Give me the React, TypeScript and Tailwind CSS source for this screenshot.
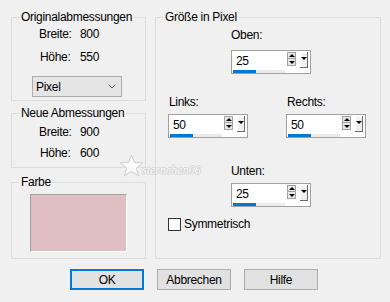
import React from "react";

const font = { fontFamily: '"Liberation Sans", Arial, sans-serif' };

function Group({ title, className, children }: { title: string; className: string; children?: React.ReactNode }) {
  return (
    <div className={`relative border border-[#dcdcdc] ${className}`}>
      <span className="absolute left-[7px] -top-[9px] bg-[#f0f0f0] px-[2px] text-[12px] leading-[16px] text-black">{title}</span>
      {children}
    </div>
  );
}

function Spinner({ value }: { value: string }) {
  return (
    <div className="flex h-[24px] w-[80px] items-center border border-[#a0a0a0] bg-white">
      <div className="flex h-full w-[54px] flex-col pl-[1px] pt-[3px]">
        <span className="pl-[3px] text-[12px] leading-[14px] text-black">{value}</span>
        <div className="mt-[2px] h-[3px] w-[52px] bg-[#ebebeb]">
          <div className="h-[3px] w-[23px] bg-[#0078d7]" />
        </div>
      </div>
      <div className="ml-[1px] flex flex-col self-start pt-[1px]">
        <div className="flex h-[7px] w-[9px] items-center justify-center border border-[#a0a0a0] bg-[#e8e8e8]">
          <div className="h-0 w-0 border-b-[3px] border-l-[3px] border-r-[3px] border-b-black border-l-transparent border-r-transparent" />
        </div>
        <div className="flex h-[7px] w-[9px] items-center justify-center border border-t-0 border-[#a0a0a0] bg-[#e8e8e8]">
          <div className="h-0 w-0 border-t-[3px] border-l-[3px] border-r-[3px] border-t-black border-l-transparent border-r-transparent" />
        </div>
      </div>
      <div className="ml-[4px] mt-[1px] flex h-[16px] w-[8px] flex-col items-center self-start border-b border-r border-[#696969] bg-[#f0f0f0] pt-[5px] shadow-[inset_1px_1px_0_#ffffff]">
        <div className="h-0 w-0 border-t-[3px] border-l-[3px] border-r-[3px] border-t-black border-l-transparent border-r-transparent" />
      </div>
    </div>
  );
}

function Btn({ label, primary }: { label: string; primary?: boolean }) {
  return (
    <div
      className={`flex h-[21px] w-[74px] items-center justify-center bg-[#e1e1e1] text-[12px] leading-[16px] text-black ${
        primary ? "border-2 border-[#0078d7]" : "border border-[#adadad]"
      }`}
    >
      {label}
    </div>
  );
}

export default function App() {
  return (
    <div
      className="relative h-[302px] w-[390px] overflow-hidden bg-[#f0f0f0] pl-[11px] pt-[17px] tracking-[-0.3px] text-black"
      style={font}
    >
      <div className="flex gap-[9px]">
        {/* left column */}
        <div className="flex w-[135px] flex-col">
          <Group title="Originalabmessungen" className="h-[84px]">
            <div className="flex flex-col pt-[8px] text-[12px] leading-[16px]">
              <div className="flex pl-[27px]">
                <span className="w-[41px]">Breite:</span>
                <span>800</span>
              </div>
              <div className="mt-[7px] flex pl-[28px]">
                <span className="w-[40px]">Höhe:</span>
                <span>550</span>
              </div>
              <div className="ml-[20px] mt-[11px] flex h-[21px] w-[90px] items-center justify-between border border-[#adadad] bg-[#e5e5e5] pl-[3px] pr-[5px]">
                <span>Pixel</span>
                <svg width="8" height="5" viewBox="0 0 8 5">
                  <path d="M0.5 0.5 L4 4 L7.5 0.5" fill="none" stroke="#555" strokeWidth="1" />
                </svg>
              </div>
            </div>
          </Group>
          <Group title="Neue Abmessungen" className="mt-[12px] h-[55px]">
            <div className="flex flex-col pt-[10px] text-[12px] leading-[16px]">
              <div className="flex pl-[27px]">
                <span className="w-[41px]">Breite:</span>
                <span>900</span>
              </div>
              <div className="mt-[5px] flex pl-[28px]">
                <span className="w-[40px]">Höhe:</span>
                <span>600</span>
              </div>
            </div>
          </Group>
          <Group title="Farbe" className="mt-[14px] h-[77px]">
            <div className="pl-[18px] pt-[11px]">
              <div className="h-[58px] w-[97px] border-b border-l border-r border-t border-b-white border-l-[#a0a0a0] border-r-white border-t-[#a0a0a0] bg-[#dfbfc2]" />
            </div>
          </Group>
        </div>

        {/* right column */}
        <Group title="Größe in Pixel" className="h-[242px] w-[226px]">
          <div className="flex flex-col text-[12px] leading-[16px]">
            <div className="flex flex-col pl-[75px] pt-[9px]">
              <span>Oben:</span>
              <div className="mt-[7px]">
                <Spinner value="25" />
              </div>
            </div>
            <div className="mt-[20px] flex pl-[12px]">
              <div className="flex flex-col">
                <span className="pl-[1px]">Links:</span>
                <div className="mt-[4px]">
                  <Spinner value="50" />
                </div>
              </div>
              <div className="ml-[38px] flex flex-col">
                <span className="pl-[1px]">Rechts:</span>
                <div className="mt-[4px]">
                  <Spinner value="50" />
                </div>
              </div>
            </div>
            <div className="mt-[25px] flex flex-col pl-[75px]">
              <span>Unten:</span>
              <div className="mt-[4px]">
                <Spinner value="25" />
              </div>
            </div>
            <div className="mt-[9px] flex items-center pl-[12px]">
              <div className="h-[13px] w-[13px] border border-[#333333] bg-white" />
              <span className="ml-[3px]">Symmetrisch</span>
            </div>
          </div>
        </Group>
      </div>

      {/* buttons */}
      <div className="ml-[59px] mt-[10px] flex gap-[13px]">
        <Btn label="OK" primary />
        <Btn label="Abbrechen" />
        <Btn label="Hilfe" />
      </div>

      {/* watermark */}
      <div className="pointer-events-none absolute left-[119px] top-[154px] flex items-start">
        <svg className="block" width="25" height="23" viewBox="0 0 25 23">
          <polygon
            points="12.5,1 15.5,8.5 24,8.8 17.3,14 19.7,22 12.5,17.3 5.3,22 7.7,14 1,8.8 9.5,8.5"
            fill="#fafafa"
            stroke="#d0d0d0"
            strokeWidth="1"
          />
        </svg>
        <span
          className="-ml-[2px] mt-[10px] text-[12px] italic leading-[12px] tracking-normal text-[#fafafa]"
          style={{
            fontFamily: '"Liberation Serif", serif',
            textShadow: "1px 0 0 #d2d2d2, -1px 0 0 #d2d2d2, 0 1px 0 #d2d2d2, 0 -1px 0 #d2d2d2",
          }}
        >
          sternchen06
        </span>
      </div>
    </div>
  );
}
